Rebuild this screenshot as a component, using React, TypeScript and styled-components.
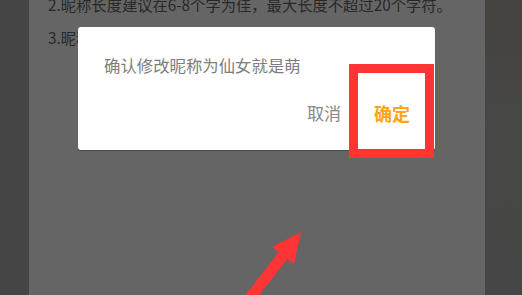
import React from 'react'
import styled, { createGlobalStyle } from 'styled-components'

const GlobalStyle = createGlobalStyle`
  html, body {
    margin: 0;
    padding: 0;
    background: #454545;
  }
  body {
    font-family: "Noto Sans CJK SC", "Noto Sans", sans-serif;
  }
`

const notes = [
  '2.昵称长度建议在6-8个字为佳，最大长度不超过20个字符。',
  '3.昵称不能包含特殊符号和敏感词汇。',
]

const App: React.FC = () => {
  return (
    <>
      <GlobalStyle />
      <Screen>
        <SideStrip />
        <Phone>
          <Notes>
            {notes.map((line, i) => (
              <Note key={i}>{line}</Note>
            ))}
          </Notes>
          <Dialog>
            <Message>确认修改昵称为仙女就是萌</Message>
            <Actions>
              <ActionButton>取消</ActionButton>
              <ActionButton primary>确定</ActionButton>
            </Actions>
          </Dialog>
          <Highlight />
          <Arrow viewBox="220 220 90 75">
            <polygon
              points="301,232 294,264 287.3,258.9 249,308.4 240.4,301.6 278.7,252.1 272,247"
              fill="#ff3434"
            />
          </Arrow>
        </Phone>
        <RightStrip />
      </Screen>
    </>
  )
}

export default App

const Screen = styled.div`
  display: flex;
  width: 522px;
  height: 295px;
  overflow: hidden;
`

const SideStrip = styled.div`
  width: 29px;
  flex-shrink: 0;
  background: #454545;
`

const RightStrip = styled.div`
  flex: 1;
  background: linear-gradient(180deg, #45423f 0%, #474745 40%, #464646 100%);
`

const Phone = styled.div`
  position: relative;
  width: 456px;
  flex-shrink: 0;
  background: #656565;
  overflow: hidden;
`

const Notes = styled.div`
  display: flex;
  flex-direction: column;
  padding-left: 19px;
  margin-top: -12.5px;
`

const Note = styled.div`
  font-size: 15.3px;
  line-height: 33px;
  color: #282828;
  white-space: nowrap;
`

const Dialog = styled.div`
  position: absolute;
  left: 49px;
  top: 27px;
  width: 357px;
  height: 123px;
  box-sizing: border-box;
  background: #ffffff;
  border-radius: 3px;
  box-shadow: 0 1px 1px rgba(0, 0, 0, 0.25);
  display: flex;
  flex-direction: column;
  padding: 26px 25px 0 26px;
`

const Message = styled.div`
  font-size: 16.4px;
  line-height: 24px;
  color: #7d7d7d;
  white-space: nowrap;
`

const Actions = styled.div`
  display: flex;
  justify-content: flex-end;
  align-items: center;
  gap: 33px;
  margin-top: 24px;
`

const ActionButton = styled.span<{ primary?: boolean }>`
  font-size: ${(p) => (p.primary ? '18px' : '17px')};
  line-height: 24px;
  font-weight: ${(p) => (p.primary ? 700 : 400)};
  color: ${(p) => (p.primary ? '#ffa412' : '#878787')};
`

const Highlight = styled.div`
  position: absolute;
  left: 320px;
  top: 64px;
  width: 85px;
  height: 94px;
  box-sizing: border-box;
  border: 9.5px solid #ff3434;
`

const Arrow = styled.svg`
  position: absolute;
  left: 191px;
  top: 220px;
  width: 90px;
  height: 75px;
`
